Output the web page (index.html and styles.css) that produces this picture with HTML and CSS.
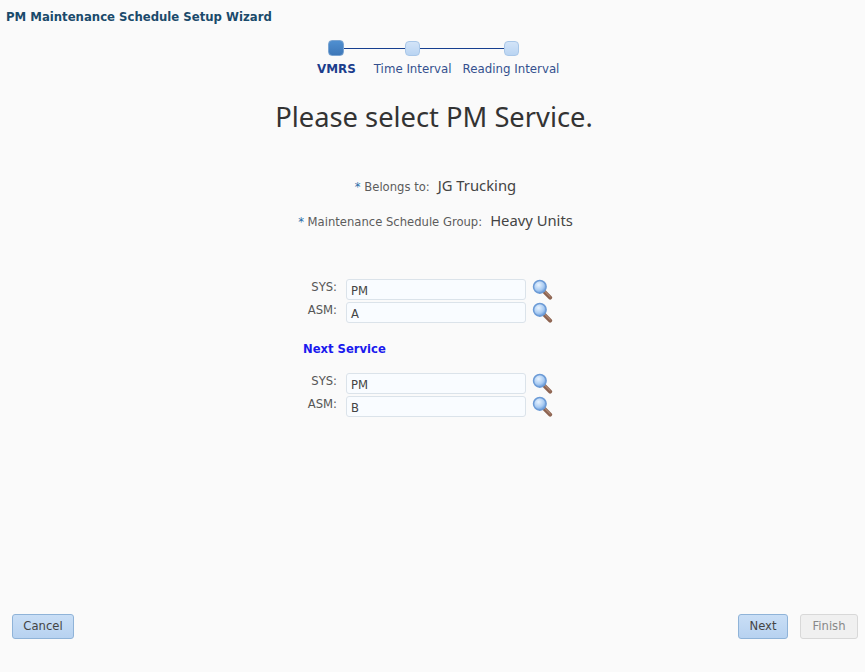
FILE: index.html
```html
<!DOCTYPE html>
<html lang="en">
<head>
<meta charset="utf-8">
<title>PM Maintenance Schedule Setup Wizard</title>
<link rel="stylesheet" href="styles.css">
</head>
<body>
<svg class="defs" width="0" height="0" aria-hidden="true">
  <defs>
    <radialGradient id="lens" cx="40%" cy="35%" r="70%">
      <stop offset="0" stop-color="#e8f3ff"/>
      <stop offset="0.6" stop-color="#a9cbf2"/>
      <stop offset="1" stop-color="#5a8fd4"/>
    </radialGradient>
    <symbol id="search" viewBox="0 0 22 22">
      <path d="M12.5 13 L19 19.5" stroke="#8d6350" stroke-width="4.2" stroke-linecap="round"/>
      <path d="M13.5 13 L19 18.5" stroke="#c09a86" stroke-width="1" stroke-linecap="round"/>
      <circle cx="8.2" cy="8.2" r="6.6" fill="url(#lens)" stroke="#6c9bd6" stroke-width="1.6"/>
    </symbol>
  </defs>
</svg>
<div class="wizard">
  <h1 class="wizard-title">PM Maintenance Schedule Setup Wizard</h1>
  <div class="steps">
    <div class="track">
      <span class="node node-active"></span><span class="line line-a"></span><span class="node"></span><span class="line line-b"></span><span class="node"></span>
    </div>
    <div class="step-labels">
      <span class="step-label step-current">VMRS</span>
      <span class="step-label">Time Interval</span>
      <span class="step-label">Reading Interval</span>
    </div>
  </div>
  <h2 class="prompt">Please select PM Service.</h2>
  <div class="info-row info-first"><span class="req">*</span>&nbsp;<span class="info-label">Belongs to:</span><span class="info-value">JG Trucking</span></div>
  <div class="info-row info-second"><span class="req">*</span>&nbsp;<span class="info-label">Maintenance Schedule Group:</span><span class="info-value">Heavy Units</span></div>
  <div class="form">
    <div class="field"><label class="field-label">SYS:</label><div class="input">PM</div><svg class="icon"><use href="#search"/></svg></div>
    <div class="field"><label class="field-label">ASM:</label><div class="input">A</div><svg class="icon"><use href="#search"/></svg></div>
    <div class="next-service">Next Service</div>
    <div class="field"><label class="field-label">SYS:</label><div class="input">PM</div><svg class="icon"><use href="#search"/></svg></div>
    <div class="field"><label class="field-label">ASM:</label><div class="input">B</div><svg class="icon"><use href="#search"/></svg></div>
  </div>
  <div class="footer">
    <button class="btn btn-cancel">Cancel</button>
    <div class="footer-right">
      <button class="btn btn-next">Next</button>
      <button class="btn btn-disabled">Finish</button>
    </div>
  </div>
</div>
</body>
</html>
```
FILE: styles.css
```css
* { box-sizing: border-box; }
html, body { margin: 0; height: 100%; }
body {
  background: #fafafa;
  font-family: "DejaVu Sans", Tahoma, sans-serif;
  font-size: 11.6px;
  color: #555;
  overflow: hidden;
}
.defs { display: block; height: 0; }
.wizard { height: 672px; display: flex; flex-direction: column; }
.wizard-title {
  margin: 0;
  padding: 9px 0 0 6px;
  font-size: 11.7px;
  line-height: 16px;
  font-weight: bold;
  color: #1a4a6b;
}
.steps { display: flex; flex-direction: column; margin: 15px 0 0 317px; }
.track { display: flex; align-items: center; height: 16px; margin-left: 11px; }
.node {
  width: 15px; height: 15px; border-radius: 4px;
  background: linear-gradient(#d3e4f8, #b9d4f2);
  border: 1px solid #a9c7e8;
  flex: none;
}
.node-active { width: 16px; height: 16px; background: linear-gradient(#4f8fd0, #3d77b8); border-color: #7ba5d2; }
.line { height: 1px; background: #163f8f; flex: none; }
.line-a { width: 61px; }
.line-b { width: 84px; }
.step-labels { display: flex; margin-top: 5px; line-height: 16px; }
.step-label { color: #34508e; font-size: 11.8px; margin-left: 11px; }
.step-current { color: #1c3d8c; font-weight: bold; font-size: 11.9px; margin-left: 0; margin-right: 7px; }
.prompt {
  margin: 20px 0 0 3px;
  text-align: center;
  font-family: "Noto Sans", sans-serif;
  font-weight: normal;
  font-size: 27.3px;
  line-height: 40px;
  color: #333;
}
.info-row { display: flex; justify-content: center; align-items: baseline; white-space: pre; line-height: 20px; margin-left: 6px; }
.info-first { margin-top: 38px; }
.info-second { margin-top: 13px; }
.req { color: #2a6ca8; }
.info-label { color: #5c5c5c; }
.info-value { font-family: "Noto Sans", sans-serif; font-size: 14.8px; color: #444; margin-left: 8px; }
.form { width: 260px; margin: 47px auto 0 296px; display: flex; flex-direction: column; }
.field { display: flex; align-items: flex-start; height: 23px; }
.field-label { width: 41px; text-align: right; line-height: 14px; color: #555; padding-top: 1px; flex: none; }
.input {
  width: 180px; height: 21px; margin-left: 9px;
  background: #f9fcff;
  border: 1px solid #dbe3ea;
  border-radius: 3px;
  padding: 1px 4px 0;
  line-height: 21px;
  color: #444;
}
.icon { width: 21px; height: 21px; margin-left: 6px; flex: none; }
.next-service {
  margin: 14px 0 0 7px;
  height: 34px;
  line-height: 20px;
  font-weight: bold;
  color: #1a1aee;
}
.footer { margin-top: auto; padding: 0 7px 33px 12px; display: flex; justify-content: space-between; }
.footer-right { display: flex; gap: 12px; }
.btn {
  height: 25px;
  border-radius: 3px;
  font: 11.6px "DejaVu Sans", Tahoma, sans-serif;
  padding: 0 0 2px;
  color: #444;
  background: linear-gradient(#c9def6, #b7d2f0);
  border: 1px solid #8fb3d8;
}
.btn-cancel { width: 62px; }
.btn-next { width: 50px; }
.btn-disabled { width: 58px; background: #f0f0f0; border-color: #d8d8d8; color: #888; }
```
